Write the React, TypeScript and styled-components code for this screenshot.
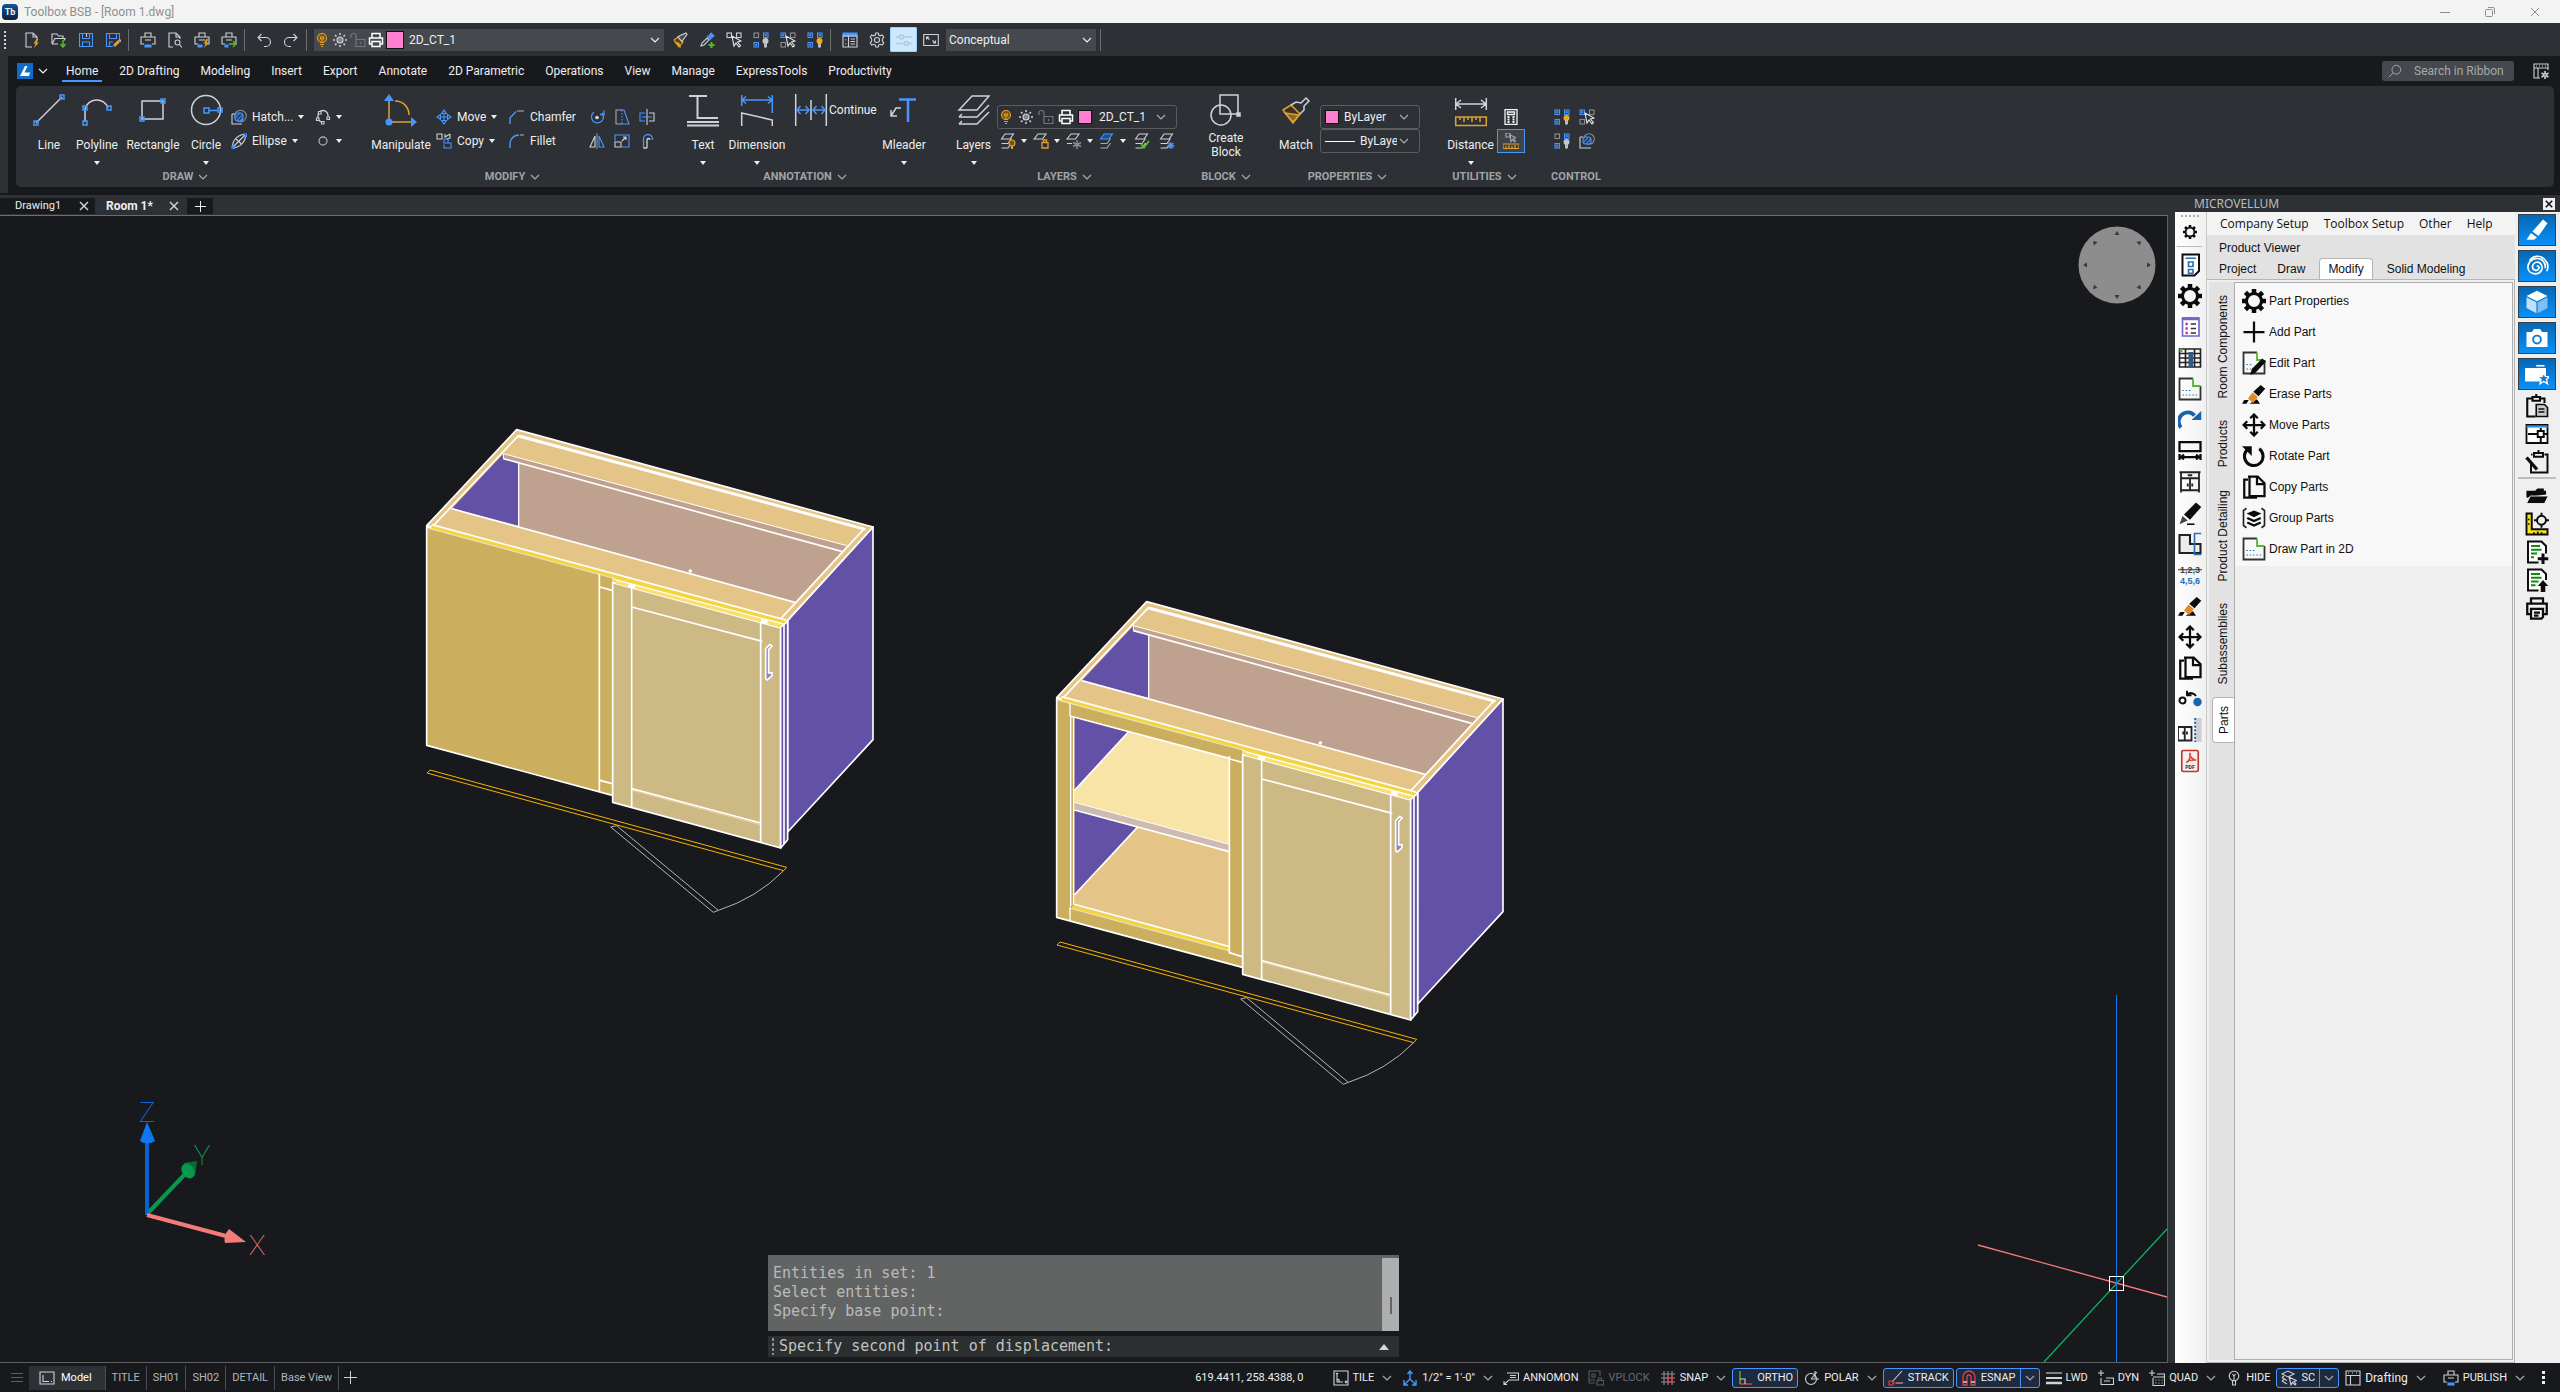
import React from "react";
import styled, { createGlobalStyle, css } from "styled-components";

const W = "#cfd2d6";
const B = "#4796ff";
const Y = "#e0a030";
const G = "#55b82f";
const R = "#e8403f";
const K = "#0b0b0b";

const GlobalStyle = createGlobalStyle`
  *, *::before, *::after { box-sizing: border-box; }
  html, body { margin: 0; padding: 0; background: #18191d; }
  body { font-family: Roboto, "Open Sans", sans-serif; font-size: 12px; line-height: 16px; color: #eceef0; }
  button, input, select { font: inherit; color: inherit; }
  button { background: none; border: 0; padding: 0; margin: 0; }
  svg { display: block; flex: none; }
`;

/* ---------- icons ---------- */

type IconProps = { size?: number; box?: number; children: React.ReactNode };
const Icon = ({ size = 16, box = 16, children }: IconProps) => (
  <svg width={size} height={size} viewBox={`0 0 ${box} ${box}`} fill="none" stroke={W} strokeWidth={1.1} aria-hidden="true">
    {children}
  </svg>
);

const Cursor = () => <path d="M6 4l2 10 2-3 3 4 1.500-1.300-3-3.700 3.500-1z" fill="#2d3034" stroke="#e6e8ea" />;
const Squares = ({ c }: { c: string[] }) => (
  <g>
    {[[1, 1], [10.5, 1], [1, 10.5]].map(([x, y], i) => (
      <g key={i} stroke={c[i]}>
        <rect x={x} y={y} width="4.5" height="4.5" />
        {c[i] === B && <rect x={x + 1.7} y={y + 1.7} width="1" height="1" />}
      </g>
    ))}
  </g>
);
const SmallBulb = ({ fill }: { fill: string }) => (
  <g stroke="none">
    <circle cx="12.5" cy="9" r="3" fill={fill} />
    <path d="M11 11h3v4l-1.500 1-1.500-1z" fill="#b9bcc0" />
  </g>
);
const Sheets = ({ top = "none", c = W }: { top?: string; c?: string }) => (
  <g stroke={c}>
    <path d="M1.500 6L5 1h8.500L10 6z" fill={top} stroke={top === "none" ? c : B} />
    <path d="M1.500 10.500h6.500l3.500-5M1.500 15h6.500l3.500-5" />
  </g>
);
const Bolt = () => <path d="M12.500 7l-3 4.500h2L10 16l5-5.500h-2.300L14.500 7z" fill={Y} stroke="none" />;
const PrinterShape = () => <path d="M5 5V1h6v4M4 12H1V5h14v7h-3M5 8h6" />;

const icons: Record<string, React.ReactNode> = {
  new: <><path d="M8 15H2V1h7l4 4v3M9 1v4h4" /><Bolt /></>,
  open: <><path d="M1 12V2h5l1.500 2H12v2.500M1 12L4 6.500h10l-1 2M1 12h6" /><path d="M12 8v6M9.500 12l2.500 3 2.500-3" stroke={G} strokeWidth="1.5" /></>,
  save: <g stroke={B}><path d="M1.500 1.500h13v13h-13z" /><path d="M4.500 1.500v5h7v-5M4.500 14.500V10h7v4.500" /><path d="M8.500 1.500V5" stroke={W} /></g>,
  saveas: <><g stroke={B}><path d="M8 14.500H1.500v-13h13V7" /><path d="M4.500 1.500v5h7v-5M4.500 14V10H8" /></g><path d="M9 14l5-5" stroke={Y} strokeWidth="3" /><path d="M14 7.500l2 2" stroke="#e89a9a" strokeWidth="2" /></>,
  print: <><PrinterShape /><path d="M5 13h6v2H5z" fill={B} stroke={B} /></>,
  preview: <><path d="M6 15H2V1h7l4 4v2M9 1v4h4" /><circle cx="10.5" cy="10.5" r="2.5" /><path d="M12.300 12.300L15 15.500" /></>,
  printbolt: <><PrinterShape /><path d="M4 13h4v2H4z" fill={B} stroke={B} /><Bolt /></>,
  plot: <><PrinterShape /><path d="M4 13h3v2H4z" fill={B} stroke={B} /><path d="M8 12h7M12 9l3 3-3 3" stroke={G} strokeWidth="1.4" /></>,
  undo: <path d="M5.500 2L2 5.500 5.500 9M2 5.500h8a4.500 4.500 0 010 9H8" />,
  redo: <path d="M10.500 2L14 5.500 10.500 9M14 5.500H6a4.500 4.500 0 000 9h2" />,
  bulb: <><circle cx="8" cy="6" r="4.5" fill="#7a5310" stroke={Y} /><path d="M6.500 7.500V5h3v2.500M8 6v5M6 10.500h4M6 12.500h4M7 14.500h2" stroke={Y} /></>,
  sun: <><circle cx="8" cy="8" r="3" fill="#83878c" /><path d="M8 1v2M8 13v2M1 8h2M13 8h2M3 3l1.500 1.500M11.500 11.500L13 13M13 3l-1.500 1.500M4.500 11.500L3 13" strokeWidth="1.5" /></>,
  lock: <g stroke="#74777b"><path d="M6 14.500h9v-7H6z M6 7.500V4a2.500 2.500 0 00-5 0v2M10.500 10v2" /></g>,
  whiteprint: <g stroke="#fff" strokeWidth="1.5"><path d="M4 6V1.500h8V6M3.500 12h-2V6h13v6h-2" /><path d="M4 9.500h8v5H4z" /></g>,
  brush: <><path d="M2 8l4-3 5 5-4 5z" fill="#5d4314" stroke={Y} /><path d="M3 10l4 1.500 1 3z" fill={Y} stroke={Y} /><path d="M6 5l2-1.500L14 1l1 1.500-4 5.500-1 1.500z" fill="#4a4d52" /></>,
  eyedrop: <><path d="M2 14l1-3 5-5 2 2-5 5z" /><path d="M8 4l4 4M9 5l3-4 3 3-4 3z" fill={B} stroke={B} /><path d="M12.500 10v6M9.500 13h6" stroke={G} strokeWidth="2" /></>,
  selsim: <><Squares c={[W, W, "transparent"]} /><Cursor /></>,
  hidegrp: <><Squares c={["#8b8e93", B, B]} /><SmallBulb fill="#c3c5c9" /></>,
  isogrp: <><Squares c={[B, "#8b8e93", "#8b8e93"]} /><Cursor /></>,
  showgrp: <><Squares c={[B, B, B]} /><SmallBulb fill="#f7a916" /></>,
  panel: <><path d="M1 1h14v3H1z" fill={B} stroke={B} /><path d="M1 4h14v11H1zM6.500 4v11M8.500 7h4.500M8.500 9.500h4.500M8.500 12h4.500" /><path d="M3.700 7v1.500M3.700 11v1.500" stroke={B} strokeWidth="1.5" /></>,
  gear: <><circle cx="8" cy="8" r="2.5" /><path d="M6.800 1h2.400l.5 2 1.600.8 2-.8 1.500 2.200L13.300 7v2l1.500 1.800-1.500 2.200-2-.7-1.600.8-.5 1.900H6.800l-.5-1.900-1.600-.8-2 .7-1.500-2.200L2.700 9V7L1.200 5.200 2.700 3l2 .8L6.300 3z" /></>,
  sliders: <g stroke="#b4c7d6" strokeWidth="1.3"><path d="M0 5h3.500M7.500 5H16M0 11.500h8.500M12.500 11.500H16" /><circle cx="5.5" cy="5" r="2" /><circle cx="10.5" cy="11.5" r="2" /></g>,
  full: <><path d="M.7 2.500h14.600v11H.7z" /><path d="M3.500 7.500v-2.500H6M3.500 5l3 2.500M12.500 8.500V11H10M12.500 11l-3-2.500" /></>,
  wsgear: <><path d="M7 15H1V1h14v6M1 5h14M5 5v10M3 3h1M6 3h1M9 3h1M12 3h1" /><path d="M12 8v8M8.500 10l7 4M8.500 14l7-4" strokeWidth="1.6" /><circle cx="12" cy="12" r="1.2" fill="#18191d" /></>,
  search: <><circle cx="9.5" cy="6.5" r="5" stroke="#a5a8ac" /><path d="M6 10l-5 5" stroke="#a5a8ac" /></>,

  hatch: <><circle cx="9.5" cy="7" r="5.8" stroke="#8b8e93" /><path d="M1 5v10h10M1 5h3" /><rect x="4" y="4" width="8" height="8" rx="3" fill="#1f3d6a" stroke={B} /><path d="M4.500 9l4.500-5M6 11.500l6-6.500M9 12l3-3.500" stroke={B} /></>,
  ellipse: <><ellipse cx="8" cy="8" rx="8" ry="4" transform="rotate(-45 8 8)" /><path d="M3 13L13.500 2.500M5 6l5.500 5" /><g stroke={B}><path d="M1 13h2.500v2.500H1zM13 1h2.500v2.500H13z" /></g></>,
  cloud: <><path d="M3 10.500V6.500a5 5 0 0110 0v1M3 10.500l3 2.500" strokeWidth="1.3" /><path d="M1.500 9h2.500v2.500H1.500zM12 8h2.500v2.500H12zM6.500 12.500H9V15H6.500zM3.500 2.500H6V5H3.500z" fill="#2d3034" /></>,
  circleS: <circle cx="8" cy="8" r="4" strokeWidth="1.3" stroke="#a7aaae" />,
  move: <><path d="M8 1v14M1 8h14" stroke={B} /><path d="M8 1L5.500 4.500h5zM8 15l-2.500-3.500h5zM1 8l3.500-2.500v5zM15 8l-3.500-2.500v5z" stroke={B} fill="#24406b" /></>,
  copy: <><path d="M1 1h5v5H1zM9 1v3l5-3M14 1v4l-4 1" /><path d="M8 6h4v4H8zM8 11.500V15h7v-5h-3" stroke={B} /></>,
  chamfer: <><path d="M1 15V9l6-6.500" stroke={B} strokeWidth="1.4" /><path d="M8 2h7" stroke="#8b8e93" strokeWidth="1.4" /></>,
  fillet: <><path d="M1 15v-3A9 9 0 0110 2" stroke={B} strokeWidth="1.4" /><path d="M11 2h4" stroke="#8b8e93" strokeWidth="1.4" /></>,
  rotate: <><path d="M5 3a6 6 0 108 1M15 1.500v4h-4" stroke={B} strokeWidth="1.3" /><circle cx="8" cy="8.5" r="1.3" fill={W} /></>,
  stretch: <><path d="M8 1H2v14h6" stroke="#a7aaae" /><path d="M8 1v14" stroke={B} strokeDasharray="1.5 1.5" /><path d="M8 15h7L10 1H8" stroke={B} /></>,
  split: <><path d="M8 0v16" /><path d="M6 4H1v8h5" stroke={B} /><path d="M10 4h5v8h-5" /><path d="M3 8h10" stroke={B} /></>,
  mirror: <><path d="M6 3v11H1z" /><path d="M8 0v16" stroke="#8b8e93" /><path d="M10 3v11h5z" stroke={B} /></>,
  scale: <><path d="M1 8V2h14v12H8" stroke={B} /><path d="M1 9h6v5H1zM8 8l4-4M9 4h3v3" /></>,
  offset: <><path d="M4.500 15V6a4.500 4.500 0 019 0v1" stroke={B} strokeWidth="1.3" /><path d="M8 15V7a1.500 1.500 0 013 0M4.500 15H8" stroke={W} strokeWidth="1.3" /></>,
  lbulb: <><Sheets /><circle cx="12" cy="10" r="3" fill="#7a5310" stroke={Y} /><path d="M12 13v3" stroke={Y} strokeWidth="2" /></>,
  llock: <><path d="M1 6L5 1h8L9.500 6z" /><path d="M9 9.500h6V15H9zM10.500 9.500V7h3v2.500" stroke={Y} strokeWidth="1.3" /></>,
  lfreeze: <><path d="M1 6L5 1h8L9.500 6zM1 10.500h5" /><path d="M11 7v9M7 9.500l8 4M15 9.500l-8 4" stroke="#8b8e93" strokeWidth="1.5" /></>,
  lblue: <Sheets top="#1d4f93" c="#a7aaae" />,
  lcheck: <><Sheets /><path d="M7 11l3 3.500L15 8" stroke={G} strokeWidth="2" /></>,
  lstar: <><Sheets /><path d="M12 9v7M8.500 12.500h7M9.500 10l5 5M14.500 10l-5 5" stroke={B} strokeWidth="1.2" /></>,
  calc: <g stroke="#f2f3f5" strokeWidth="1.3"><path d="M2 .7h12v14.600H2zM4.500 3h7v2.500h-7z" /><path d="M4.500 8h2M9.500 8h2M4.500 10.500h2M9.500 10.500h2M4.500 13h2M9.500 13h2" strokeWidth="1.8" /></g>,
  quick: <><path d="M3 0h4v4H3z" stroke="#a7aaae" /><path d="M7 2l1 6.500 1.500-2 2 2.500 1-1-2-2.500 2-1z" stroke="#a7aaae" /><path d="M0 11h16v4.500H0zM3 13v2M6 12v3M9 13v2M12 12v3" stroke={Y} /></>,
  hatchhide: <><circle cx="10" cy="6" r="5.3" stroke="#8b8e93" /><path d="M1 4v11h11M1 4h3" /><rect x="4" y="4" width="8" height="7" rx="2.5" fill="#1f3d6a" stroke={B} /><path d="M5 9l4-4.500M7 11l5-5.500" stroke={B} /></>,

  modelI: <><path d="M1 2h14v12H1zM4 5v6.500h6" /><path d="M12 11.500h1" /></>,
  tile: <path d="M1 1h14v14H1zM4 3v9h6M4 9.500h2v2M12 11l2 2M14 11l-2 2M3 3l1 1.500L5 3" />,
  annos: <g stroke={B} strokeWidth="1.4"><path d="M8 1v8M5.500 4L8 1l2.500 3M8 9l-6 6M8 9l6 6M2 10v5h4M14 10v5h-4" /></g>,
  annomon: <path d="M4 3h11.500v7H6L1 14.500M1 11v3.500h3M7 5.500h6M7 7.500h6" />,
  vplock: <g stroke="#55585c"><path d="M7 13H1V1h11v5M4 4h3v3H4zM1 10h6M9 10.500h6.500V15H9zM10.500 10.500V8h3v2.500" /></g>,
  snap: <><path d="M4 1v14M8 1v14M12 1v14M1 4h14M1 8h14M1 12h14" stroke="#8b8e93" /><path d="M8 5v7h4V5M5 8h8" stroke={R} /></>,
  ortho: <><path d="M3 1v13" stroke={G} strokeWidth="1.4" /><path d="M3 14h12" stroke={R} strokeWidth="1.4" /><path d="M3 9h5v5" /></>,
  polar: <><circle cx="7" cy="9" r="5.5" /><path d="M7 9h8M7 9l6-7M11 1v7" /></>,
  strack: <><path d="M4 12L14 1M8 13h7" stroke={W} /><path d="M1 11h4v4H1zM5 13h9" stroke={R} /></>,
  magnet: <g stroke={R} strokeWidth="1.3"><path d="M2 15V7a6 6 0 0112 0v8h-4V7a2 2 0 00-4 0v8z" /><path d="M2 12h4M10 12h4" stroke={W} /></g>,
  lwd: <><path d="M0 3h16" /><path d="M0 8h16" strokeWidth="2" /><path d="M0 13h16" strokeWidth="2.5" /></>,
  dyn: <path d="M3 0v6M0 3h6M3 8v6.500h12.500V8H8M6 11h6" />,
  quad: <path d="M3 0v6M0 3h6M4 8v7.500h11.500V4H8M4 7h11M6.500 10h1M9.500 10h1M12.500 10h1M6.500 13h1M9.500 13h1M12.500 13h1" />,
  hide: <><circle cx="8" cy="6" r="4.8" /><path d="M6.500 4l1.500 2 1.500-2M8 6v5M6.500 10.500v4.500h3v-4.500" /></>,
  sc: <><path d="M1 4l6-3 6 3-6 3zM1 7.500l5 3M1 11l5 3M3 6l-2 1.500M3 9.500L1 11" /><path d="M8 7l2 8 1.500-2.500L14 15l1-1-2-2.500 2.500-1z" fill="#2a3b52" /></>,
  drafting: <path d="M1 1h14v14H1zM1 5.500h14M5.500 5.500V15M3 3h1M7 3h1M11 3h1" />,

  gearK: <><path d="M8 0v16M0 8h16M2.300 2.300l11.400 11.400M13.700 2.300L2.300 13.700" stroke={K} strokeWidth="3" /><circle cx="8" cy="8" r="5" fill="#f7f7f7" stroke={K} strokeWidth="2" /></>,
  plusK: <path d="M8 1v14M1 8h14" stroke={K} strokeWidth="1.5" />,
  part2d: <><path d="M10 1H1v14h14V6" stroke="#333" strokeWidth="1.2" /><path d="M10 1v5h5" stroke={G} strokeWidth="1.2" /><path d="M3 9h6M3 12h10" stroke="#2d76c2" strokeDasharray="1 1.2" strokeWidth=".8" /></>,
  edit: <><path d="M10 1H1v14h14V6" stroke="#333" strokeWidth="1.2" /><path d="M10 1v5h3" stroke={G} strokeWidth="1.2" /><path d="M3 9h4M3 12h3" stroke="#2d76c2" strokeDasharray="1 1.2" strokeWidth=".8" /><path d="M5.500 16l1-4 7-7L16 7l-7 7.500z" fill={K} stroke="none" /></>,
  erase: <><path d="M0 14.500l1.500-2.500h3L3 14.500zM5 14.500h7l-2-3z" fill={K} stroke="none" /><path d="M4 11l3-4 3.500 3-3 4z" fill="#e08a2c" stroke="none" /><path d="M7.500 6.500L12.500 2 15.500 4.500 11 9.500z" fill={K} stroke="none" /></>,
  moveK: <path d="M8 1v14M1 8h14M5.500 3.500L8 1l2.500 2.500M5.500 12.500L8 15l2.500-2.500M3.500 5.500L1 8l2.500 2.500M12.500 5.500L15 8l-2.500 2.500" stroke={K} strokeWidth="1.5" />,
  rotateK: <><path d="M3.800 3.500a6.200 6.200 0 107.700-.3" stroke={K} strokeWidth="2" /><path d="M0 1.500h6.500V8z" fill={K} stroke="none" /></>,
  copyK: <path d="M4 3H1.500v12H10M4 1h6.500L15 5.500V14H5V1M10 1v5h5" stroke={K} strokeWidth="1.5" />,
  group: <><path d="M3 1.500L1 3v10l2 1.500M13 1.500L15 3v10l-2 1.500" stroke="#222" /><path d="M8 3l5 2-5 2.500L3 5z" fill={K} stroke="none" /><path d="M3.500 8L8 10l4.500-2M3.500 11L8 13l4.500-2" stroke={K} strokeWidth="1.6" /></>,
  docform: <><path d="M3 1h11v11l-3 3H3z" fill="#fff" stroke={K} strokeWidth="1.3" /><path d="M5 3.500h7M7 6h3v3H7zM7 11h3v2.500H7z" stroke="#2b6fb5" /></>,
  props: <><path d="M3 2h11v12H3z" fill="#fff" stroke="#6b69c9" /><path d="M3 2.500h11" stroke="#6b69c9" strokeWidth="2" /><path d="M5 6h1.500M5 9h1.500M5 12h1.500" stroke="#d21bb0" strokeWidth="1.6" /><path d="M8.500 6H12M8.500 9H12M8.500 12H12" stroke="#333" /></>,
  tableK: <><path d="M1 2h14v12H1zM1 5h14M1 8h14M1 11h14M5 2v12M11 2v12" stroke="#222" /><path d="M8.500 4v10" stroke="#35597e" strokeWidth="3" /><path d="M1 2h2v2H1z" fill={G} stroke="none" /></>,
  redoB: <><path d="M2 13a6 6 0 019-8" stroke="#1b62ad" strokeWidth="2.5" /><path d="M9 8h6.500V2z" fill="#1b62ad" stroke="none" /></>,
  dimK: <path d="M1 2h14v6H1zM1 10v4M15 10v4M1 12h14M4 10.500L2 12l2 1.500M12 10.500l2 1.500-2 1.500" stroke={K} strokeWidth="1.5" />,
  cabinet: <path d="M1 1.500h14M2 2v13M14 2v13M2 5.500h12M2 13.500h12M8 5.500v8M6.500 3.500h3M6.500 9v2M9.500 9v2" stroke="#222" strokeWidth="1.2" />,
  marker: <><path d="M4 9l8-8 3.500 3L8 12.500z" fill={K} stroke="none" /><path d="M3 10l3.500 3L1 15.500z" fill="#444" stroke="none" /><path d="M6 15.500h5" stroke={K} /></>,
  lshape: <><path d="M1 2h7v6h7v6H1z" stroke="#222" strokeWidth="1.4" fill="#ececec" /><path d="M15.500 1H11v14h4.500" stroke="#2b6fb5" /></>,
  nums: <><g stroke="none" fontFamily="Liberation Sans, Arial, sans-serif" fontSize="6" fontWeight="700" textAnchor="middle"><text x="8" y="6.5" fill="#444">1,2,3</text><text x="8" y="14" fill="#2470b5">4,5,6</text></g><path d="M0 4.500h16" stroke="#333" strokeWidth=".7" /></>,
  link: <><circle cx="3" cy="9" r="2" stroke={K} strokeWidth="1.3" /><circle cx="13" cy="10" r="2.8" fill="#1b62ad" stroke="none" /><path d="M12 6a4 4 0 00-6-1M6 2.500V5.500h3" stroke={K} strokeWidth="1.3" /></>,
  cab2: <><path d="M0 6h9v9H0zM4.500 6v9M3.500 9v2M6 9v2" stroke="#222" strokeWidth="1.2" /><path d="M14 0v16" stroke="#cfcfcf" strokeWidth="3.5" /><path d="M11.500 0v16" stroke="#1b62ad" strokeDasharray="1.5 1" strokeWidth="1.3" /></>,
  pdf: <><rect x="2.5" y="1" width="11" height="14" rx="1" fill="#f6eeee" stroke="#b9392f" /><path d="M5.500 9C9 7 8 4 8 3s-1 3 4 4.500c-3-.5-5 0-6.500 1.500" stroke="#e0443a" /><text x="8" y="13.5" fontSize="3.5" fontWeight="700" stroke="none" fill="#333" textAnchor="middle" fontFamily="Roboto, sans-serif">PDF</text></>,

  markerW: <><path d="M5 9l7-8 3 2.500L9 12z" fill="#fff" stroke="none" /><path d="M4 10l4 3-2 1.500H1z" fill="#fff" stroke="none" /></>,
  finger: <g stroke="#fff" strokeWidth="1.1"><path d="M8 8.500c.5-1 2 0 1 1.500s-4 1-4-1.500 3-4 5-2.500 2 5-.5 6.500-7 .5-7.500-3S4.500 3 8 3s6 3 5.500 6.500M3 4.500C5 1 10 .5 13 3.500s2.500 6 1.500 8" /></g>,
  cube: <g stroke="none"><path d="M8 .5L15 4 8 7.500 1 4z" fill="#fff" /><path d="M1 4.800l6.600 3.300v7.400L1 12z" fill="#bfe0fa" /><path d="M15 4.800L8.400 8.100v7.400L15 12z" fill="#7fc0f4" /></g>,
  camera: <><path d="M1 4h3.500L6 2h4l1.500 2H15v10H1z" fill="#fff" stroke="none" /><circle cx="8" cy="9" r="2.6" stroke="#0b7edb" strokeWidth="1.3" /></>,
  folderStar: <><path d="M7.500 2.500H13" stroke="#fff" /><path d="M0 4h14v9H0z" fill="#fff" stroke="none" /><path d="M12.500 7l1.100 2.600 2.800.2-2.100 1.900.7 2.800-2.500-1.500L10 14.500l.7-2.800-2.100-1.900 2.800-.2z" fill="#0b7edb" stroke="#fff" strokeWidth=".9" /></>,
  clip1: <><path d="M7 15H1.500V3H5M10 3h3v3M5 2h5v2.500H5zM7.500 0v2" stroke={K} strokeWidth="1.4" /><path d="M7.500 7H13l2 2v6H7.500z" fill="#ccc" stroke={K} /><path d="M9 10h4M9 12h4" stroke={K} /></>,
  clip2: <><path d="M1 2h14v12H1z" fill="#fff" stroke={K} strokeWidth="1.2" /><path d="M1 3h14" stroke="#2f93e8" strokeWidth="1.5" /><path d="M2 8h6M8.500 6h4v4h-4zM10.500 4v2M10.500 10v4M12.500 8H15" stroke={K} strokeWidth="1.3" /></>,
  clip3: <><path d="M5 3H4M4 9v6h11V3h-2M6 2h6v2.500H6zM9 0v2" stroke={K} strokeWidth="1.3" /><path d="M1 5l7 8" stroke={K} strokeWidth="2.2" /></>,
  folderK: <><path d="M1.500 9V5H7l1.500-1.500H12V5h1.500v2" fill={K} stroke={K} /><path d="M1 13L3.500 8H15.500L13 13z" fill={K} stroke="#efefef" strokeWidth=".6" /></>,
  ruler: <><path d="M1 1h3.500v10.500H15V15H1z" fill="#f4e51c" stroke={K} strokeWidth="1.3" /><path d="M6 13.500v1.500M8.500 13v2M11 13.500V15M2 5h1M2 8h1" stroke={K} /><circle cx="11" cy="5.5" r="3" stroke={K} strokeWidth="1.3" /><path d="M11 .5V3M11 8v2.500M6 5.500h2.500M13.500 5.500H16" stroke={K} strokeWidth="1.3" /></>,
  repAdd: <><path d="M9 15H2V1h9l3 3v5" fill="#fff" stroke={K} strokeWidth="1.3" /><path d="M4 4h6M4 6.500h7M4 9h4M4 11.500h2" stroke="#128a12" strokeWidth="1.4" /><path d="M12 9v7M8.500 12.500h7" stroke={K} strokeWidth="2" /></>,
  repUp: <><path d="M9 15H2V1h9l3 3v4" fill="#fff" stroke={K} strokeWidth="1.3" /><path d="M4 4h6M4 6.500h7M4 9h5M4 11.500h3" stroke="#128a12" strokeWidth="1.4" /><path d="M12 8l3.500 4h-2v4h-3v-4h-2z" fill={K} stroke="none" /></>,
  printK: <path d="M4 5V1.500h8V5M4 12H1.500V5h13v7H12M4 8.500h8V14l-1 1H4zM6 11h4M6 13h3" stroke={K} strokeWidth="1.5" />,
};

const bigIcons: Record<string, React.ReactNode> = {
  line: <><path d="M3 29L29 3" /><g stroke={B}><path d="M1 27h4v4H1zM27 1h4v4h-4z" /></g></>,
  polyline: <><path d="M4 28V15a12 12 0 0123-1" stroke={W} /><g stroke={B}><path d="M2 27h4v4H2zM2 12h4v4H2zM26 12h4v4h-4z" /></g></>,
  rect: <><path d="M5 7h21v18H5z" /><g stroke={B}><path d="M24 5h4v4h-4zM3 23h4v4H3z" /></g></>,
  circle: <><circle cx="16" cy="16" r="14.5" /><g stroke={B}><path d="M14 14h5v5h-5zM28 14h4v4h-4zM19 16.500h9" /></g></>,
  manip: <><path d="M4 28V4M4 28h24" stroke={Y} /><path d="M10 7c9 0 14 7 14 14" stroke={Y} /><path d="M4 0l5 7H-1zM32 28l-6-5v10z" fill={B} stroke="none" /><circle cx="4" cy="28" r="3.5" fill={B} stroke="none" /></>,
  text: <path d="M2 2h18M10.500 2v22H31M0 28h32M0 31.500h32" strokeWidth="2" />,
  dim: <><g stroke={B}><path d="M.700 1v11M31.300 1v18M1 6h30M5 2.500L1 6l4 3.500M27 2.500L31 6l-4 3.500" /></g><path d="M.700 32V19l30.600 7v6" /></>,
  cont: <><path d="M.700 0v32M16 6v20M31.300 0v32" /><g stroke={B}><path d="M2 16h12M5.500 12L2 16l3.500 4M10.500 12l3.500 4-3.500 4M18 16h12M21.500 12L18 16l3.500 4M26.500 12l3.500 4-3.500 4" /></g></>,
  mleader: <><path d="M11 5.500h17M20 5.500V28" stroke={B} strokeWidth="2.5" /><path d="M13 14H8l-5 8M3 16v6h6" /></>,
  layers: <><path d="M1 16L14 2h17L19 16zM1 23h18L31 11M1 30h18L31 18" /><path d="M1 23l3-3M1 30l3-3" /></>,
  block: <><circle cx="11" cy="21" r="10" /><path d="M10 1h18v19H10z" /><path d="M27 19h3v3h-3z" fill={W} /></>,
  match: <><path d="M3 16l8-5 9 9-7 9z" fill="#3a3325" stroke={Y} /><path d="M5 19l14 2-6 7z" fill="#8a6428" stroke={Y} /><path d="M11 11l5-3 5 1 5-5 3 3-5 5v4l-4 4" /></>,
  dist: <><path d="M.700 4v12M31.300 4v12M1 10h30M6 6l-5 4 5 4M26 6l5 4-5 4" /><path d="M.700 23h30.600v8.500H.700zM5 23v3M9 23v5M13 23v3M17 23v5M21 23v3M25 23v5" stroke={Y} /></>,
};

const Ico = ({ n, size }: { n: string; size?: number }) => <Icon size={size}>{icons[n]}</Icon>;
const Big = ({ n }: { n: string }) => <svg width={32} height={32} viewBox="0 0 32 32" fill="none" stroke={W} strokeWidth={1.5} overflow="visible" aria-hidden="true">{bigIcons[n]}</svg>;

const Chevron = ({ c = "#a7aaae" }: { c?: string }) => (
  <svg width="10" height="10" viewBox="0 0 10 10" fill="none" stroke={c} strokeWidth="1.2" aria-hidden="true"><path d="M1 3l4 4 4-4" /></svg>
);
const Tri = () => (
  <svg width="6" height="4" viewBox="0 0 6 4" aria-hidden="true"><path d="M0 0h6L3 4z" fill="#eceef0" /></svg>
);
const Cross = ({ c = "#cfd2d6", w = 1.5, s = 10 }: { c?: string; w?: number; s?: number }) => (
  <svg width={s} height={s} viewBox="0 0 10 10" stroke={c} strokeWidth={w} aria-hidden="true"><path d="M1 1l8 8M9 1L1 9" /></svg>
);

/* ---------- shell ---------- */

const Shell = styled.div`
  display: flex;
  flex-direction: column;
  min-height: 100vh;
  background: #18191d;
`;

const TitleBar = styled.header`
  display: flex;
  align-items: center;
  gap: 6px;
  height: 23px;
  padding: 0 17px 0 2px;
  background: #f3f3f3;
  color: #8f8f8f;
`;
const AppLogo = styled.span`
  display: grid;
  place-items: center;
  width: 16px;
  height: 16px;
  border-radius: 4px;
  background: linear-gradient(#12559b, #0c2138);
  color: #e8f4ff;
  font-size: 9px;
  font-weight: 700;
`;
const WindowButtons = styled.div`
  display: flex;
  gap: 29px;
  margin-left: auto;
`;
const WindowButton = styled.button`
  display: grid;
  place-items: center;
  width: 16px;
  height: 16px;
`;

const Toolbar = styled.div`
  display: flex;
  align-items: center;
  height: 33px;
  background: #2d3034;
`;
const Grip = styled.span`
  width: 2px;
  height: 18px;
  margin: 0 12px 0 4px;
  background: repeating-linear-gradient(#cfd2d6 0 2px, transparent 2px 4px);
`;
const ToolButton = styled.button<{ $on?: boolean }>`
  display: grid;
  place-items: center;
  width: 27px;
  height: 25px;
  border-radius: 2px;
  ${(p) => p.$on && css`background: #cce8ff; box-shadow: inset 0 0 0 1px #99d1ff;`}
`;
const ToolSep = styled.span`
  width: 1px;
  height: 22px;
  margin: 0 5px 0 2px;
  background: #6a6c70;
`;
const Combo = styled.label<{ $w: number; $flat?: boolean; $gap?: number; $pl?: number }>`
  display: flex;
  align-items: center;
  gap: ${(p) => p.$gap ?? 2}px;
  width: ${(p) => p.$w}px;
  height: ${(p) => (p.$flat ? 22 : 24)}px;
  padding: 0 ${(p) => (p.$flat ? 4 : 10)}px 0 ${(p) => p.$pl ?? 0}px;
  margin: ${(p) => (p.$flat ? "0 2px" : "0")};
  background: ${(p) => (p.$flat ? "#45484c" : "transparent")};
  border: ${(p) => (p.$flat ? "0" : "1px solid #5a5c60")};
  border-radius: ${(p) => (p.$flat ? 0 : 3)}px;
`;
const Select = styled.select`
  appearance: none;
  flex: 1;
  min-width: 0;
  height: 20px;
  padding: 0;
  margin: 0 0 0 3px;
  border: 0;
  outline: 0;
  background: transparent;
  text-overflow: clip;
`;
const Swatch = styled.span<{ $s: number }>`
  flex: none;
  width: ${(p) => p.$s}px;
  height: ${(p) => p.$s}px;
  background: #ff80d0;
  border: 1px solid #111;
`;

/* ---------- ribbon ---------- */

const RibbonWrap = styled.div`
  display: flex;
  height: 139px;
`;
const RibbonGrip = styled.div`
  display: flex;
  align-items: center;
  width: 8px;
  margin-bottom: 2px;
  background: #2d3034;
`;
const RibbonMain = styled.div`
  flex: 1;
  min-width: 0;
  padding: 0 6px 8px 8px;
`;
const RibbonTabs = styled.nav`
  display: flex;
  align-items: center;
  gap: 1px;
  height: 30px;
`;
const BrandButton = styled.button`
  display: flex;
  align-items: center;
  gap: 5px;
  margin: 0 7px 0 1px;
`;
const RibbonTab = styled.button<{ $on?: boolean }>`
  position: relative;
  height: 28px;
  padding: 0 10px;
  ${(p) => p.$on && css`
    &::after { content: ""; position: absolute; left: 6px; right: 6px; bottom: 3px; height: 2px; background: #4796ff; }
  `}
`;
const SearchBox = styled.label`
  display: flex;
  align-items: center;
  gap: 12px;
  width: 132px;
  height: 20px;
  margin: 0 18px 0 auto;
  padding-left: 6px;
  border-radius: 3px;
  background: #45484c;
  input {
    width: 100px;
    padding: 0;
    border: 0;
    outline: 0;
    background: transparent;
  }
  input::placeholder { color: #a5a8ac; opacity: 1; }
`;
const WorkspaceBtn = styled.button`
  margin-right: 5px;
`;
const RibbonPanel = styled.div`
  display: flex;
  height: 101px;
  border-radius: 5px;
  background: #2d3034;
`;
const GroupBox = styled.section<{ $w: number }>`
  position: relative;
  display: flex;
  flex-direction: column;
  flex: none;
  width: ${(p) => p.$w}px;
  & + &::before { content: ""; position: absolute; left: 0; top: 23px; height: 57px; width: 1px; background: #4b4e52; }
`;
const GroupBody = styled.div<{ $pl: number }>`
  display: flex;
  height: 82px;
  padding: 8px 0 0 ${(p) => p.$pl}px;
`;
const GroupTitle = styled.button`
  display: flex;
  align-items: center;
  justify-content: center;
  gap: 5px;
  height: 18px;
  color: #a0a3a8;
  font-size: 11px;
  font-weight: 700;
`;
const BigBtn = styled.button<{ $w: number }>`
  display: flex;
  flex-direction: column;
  align-items: center;
  width: ${(p) => p.$w}px;
  height: 72px;
`;
const BigLabel = styled.span`
  display: flex;
  align-items: center;
  height: 28px;
  margin: 5px 0 2px;
  line-height: 14px;
  text-align: center;
  white-space: pre;
`;
const Rows = styled.div<{ $w?: number }>`
  width: ${(p) => (p.$w ? `${p.$w}px` : "auto")};
  padding-top: 11px;
`;
const Row = styled.div`
  display: flex;
  height: 24px;
`;
const SmallBtn = styled.button<{ $w?: number; $on?: boolean; $c?: boolean }>`
  display: flex;
  align-items: center;
  justify-content: ${(p) => (p.$c ? "center" : "flex-start")};
  gap: 5px;
  width: ${(p) => (p.$w ? `${p.$w}px` : "auto")};
  height: 24px;
  white-space: nowrap;
  ${(p) => p.$on && css`background: #3f4246; border: 1px solid #4796ff;`}
`;
const ContinueBtn = styled.button`
  display: flex;
  align-items: center;
  gap: 2px;
  width: 88px;
  height: 32px;
  padding-left: 7px;
`;
const LineSample = styled.span`
  flex: none;
  width: 30px;
  height: 1px;
  background: #fff;
`;

const Group = ({ title, w, pl, plain, children }: { title: string; w: number; pl: number; plain?: boolean; children: React.ReactNode }) => (
  <GroupBox $w={w}>
    <GroupBody $pl={pl}>{children}</GroupBody>
    <GroupTitle>{title}{!plain && <Chevron />}</GroupTitle>
  </GroupBox>
);
const BigButton = ({ n, w, label, arrow }: { n: string; w: number; label: string; arrow?: boolean }) => (
  <BigBtn $w={w}><Big n={n} /><BigLabel>{label}</BigLabel>{arrow && <Tri />}</BigBtn>
);
const Small = ({ n, w, label, arrow, center }: { n: string; w?: number; label?: string; arrow?: boolean; center?: boolean }) => (
  <SmallBtn $w={w} $c={center} aria-label={label ?? n}><Ico n={n} />{label}{arrow && <Tri />}</SmallBtn>
);

/* ---------- workspace ---------- */

const Workspace = styled.main`
  display: flex;
  flex: 1;
  gap: 7px;
  background: #2d3034;
`;
const Drawing = styled.section`
  display: flex;
  flex: 1;
  flex-direction: column;
  min-width: 0;
`;
const DocTabs = styled.div`
  display: flex;
  align-items: flex-end;
  gap: 2px;
  height: 21px;
  padding-bottom: 1px;
  border-bottom: 1px solid #6c6d70;
`;
const DocTab = styled.div<{ $on?: boolean; $w: number }>`
  display: flex;
  align-items: center;
  justify-content: space-between;
  width: ${(p) => p.$w}px;
  height: 16px;
  padding: 0 6px 0 ${(p) => (p.$on ? 9 : 15)}px;
  background: ${(p) => (p.$on ? "#2d3034" : "#18191d")};
  font-weight: ${(p) => (p.$on ? 700 : 400)};
  font-size: ${(p) => (p.$on ? 12 : 11)}px;
`;
const AddTab = styled.button`
  display: grid;
  place-items: center;
  width: 26px;
  height: 16px;
  background: #18191d;
`;
const CanvasArea = styled.div`
  position: relative;
  flex: 1;
  background: #18191d;
  border: solid #5f6063;
  border-width: 0 1px 1px 0;
`;
const Scene = styled.svg`
  position: absolute;
  inset: 0;
  width: 100%;
  height: 100%;
`;
const CommandDock = styled.div`
  position: absolute;
  left: 768px;
  bottom: 5px;
  width: 631px;
  font-family: "DejaVu Sans Mono", "Liberation Mono", monospace;
  font-size: 15px;
  line-height: 19px;
`;
const History = styled.div`
  position: relative;
  height: 76px;
  padding: 9px 5px;
  background: #626463;
  color: #b9bbbb;
  p { margin: 0; }
  &::after { content: ""; position: absolute; right: 0; top: 3px; bottom: 0; width: 17px; background: #adafaf; }
  &::before { content: ""; position: absolute; z-index: 1; right: 7px; top: 42px; width: 2px; height: 17px; background: #666; }
`;
const CommandLine = styled.label`
  display: flex;
  align-items: center;
  gap: 5px;
  height: 21px;
  margin-top: 5px;
  padding: 0 10px 0 4px;
  background: #2b2f30;
  color: #c0c2c2;
  input {
    flex: 1;
    padding: 0;
    border: 0;
    outline: 0;
    background: transparent;
  }
`;
const CommandGrip = styled.span`
  width: 2px;
  height: 17px;
  background: repeating-linear-gradient(#8d9090 0 3px, transparent 3px 5px);
`;

/* ---------- side panel ---------- */

const Side = styled.aside`
  display: flex;
  flex-direction: column;
  width: 385px;
  color: #111;
`;
const SideHead = styled.div`
  display: flex;
  align-items: center;
  justify-content: space-between;
  height: 17px;
  padding: 0 5px 0 19px;
  color: #b9bbbe;
  font-family: "Noto Sans", sans-serif;
`;
const CloseBtn = styled.button`
  display: grid;
  place-items: center;
  width: 12px;
  height: 12px;
  background: #f0f0f0;
`;
const SideBody = styled.div`
  display: flex;
  flex: 1;
  background: #efefef;
`;
const LeftStrip = styled.div`
  display: flex;
  flex-direction: column;
  align-items: center;
  width: 32px;
  padding-right: 2px;
  border-right: 1px solid #c9c9c9;
  background: linear-gradient(90deg, #fff, #f0f0f0);
`;
const StripGrip = styled.span`
  width: 18px;
  height: 2px;
  margin-top: 3px;
  background: repeating-linear-gradient(90deg, #aaa 0 2px, transparent 2px 4px);
`;
const StripBtn = styled.button<{ $h?: number }>`
  display: grid;
  place-items: center;
  width: 28px;
  height: ${(p) => p.$h ?? 31}px;
`;
const StripRule = styled.hr`
  width: 25px;
  height: 1px;
  margin: 0 0 2px;
  border: 0;
  background: #bdbdbd;
`;
const Center = styled.div`
  display: flex;
  flex: 1;
  flex-direction: column;
  min-width: 0;
`;
const Menu = styled.nav`
  display: flex;
  align-items: center;
  gap: 15px;
  height: 23px;
  padding-left: 13px;
  background: #f3f3f3;
  font-family: "Open Sans", "Noto Sans", sans-serif;
`;
const PanelTabs = styled.div`
  padding: 3px 12px 0 4px;
  background: #e2e2e2;
  font-family: "Liberation Sans", Arial, sans-serif;
`;
const TabRow = styled.div`
  display: flex;
  gap: 5px;
  height: 20px;
  & + & { height: 21px; }
`;
const PanelTab = styled.button<{ $on?: boolean }>`
  height: 100%;
  padding: 0 8px;
  white-space: nowrap;
  ${(p) => p.$on && css`background: #fff; border: 1px solid #b5b5b5; border-bottom: 0; border-radius: 4px 4px 0 0; margin: 0 1px;`}
`;
const PanelFrame = styled.div`
  display: flex;
  flex: 1;
  padding: 2px 1px 2px 2px;
  border: 1px solid #b5b5b5;
  border-left: 0;
  background: #efefef;
  font-family: "Liberation Sans", Arial, sans-serif;
`;
const VTabs = styled.div`
  display: flex;
  flex-direction: column;
  align-items: flex-end;
  width: 25px;
  padding-top: 1px;
  background: #e2e2e2;
`;
const VTab = styled.button<{ $on?: boolean }>`
  display: flex;
  justify-content: center;
  width: 22px;
  padding: ${(p) => (p.$on ? "8px 0" : "12px 0 10px")};
  ${(p) => p.$on && css`background: #fff; border: 1px solid #b5b5b5; border-right: 0; border-radius: 4px 0 0 4px; margin-top: 2px;`}
  span { writing-mode: vertical-rl; transform: rotate(180deg); }
`;
const ListPane = styled.div`
  flex: 1;
  border: 1px solid #adadad;
`;
const PartList = styled.ul`
  margin: 0;
  padding: 2px 0;
  list-style: none;
  background: #f8f8f8;
`;
const PartItem = styled.button`
  display: flex;
  align-items: center;
  gap: 3px;
  width: 100%;
  height: 31px;
  padding-left: 7px;
`;
const RightStrip = styled.div`
  display: flex;
  flex-direction: column;
  align-items: center;
  width: 45px;
  padding: 2px 3px 0 2px;
`;
const BlueBtn = styled.button`
  display: grid;
  place-items: center;
  width: 38px;
  height: 32px;
  margin-bottom: 4px;
  border: 1px solid #33414e;
  background: linear-gradient(#0567b4, #0a90f8);
  & + :not(&) { margin-top: -2px; }
`;
const PlainBtn = styled.button`
  display: grid;
  place-items: center;
  width: 38px;
  height: 28px;
`;
const RightRule = styled.hr`
  width: 38px;
  height: 2px;
  margin: 1px 0 3px;
  border: 0;
  background: #bdbdbd;
`;

/* ---------- status bar ---------- */

const StatusBar = styled.footer`
  display: flex;
  align-items: center;
  height: 29px;
  padding: 0 14px 0 11px;
  background: #18191d;
  font-size: 11px;
`;
const LayoutTab = styled.button<{ $on?: boolean }>`
  display: flex;
  align-items: center;
  gap: 6px;
  height: 24px;
  padding: 0 ${(p) => (p.$on ? 13 : 6)}px 0 ${(p) => (p.$on ? 10 : 6)}px;
  border-right: 1px solid #4b4e52;
  color: ${(p) => (p.$on ? "#fff" : "#b4b6ba")};
  background: ${(p) => (p.$on ? "#2d3034" : "transparent")};
  &:last-of-type { border: 0; }
`;
const MenuLines = styled.button`
  width: 12px;
  height: 10px;
  margin-right: 6px;
  background: repeating-linear-gradient(#5b5d61 0 1px, transparent 1px 4px);
`;
const PlusButton = styled.button`
  margin-left: 5px;
`;
const StatusGroup = styled.div`
  display: flex;
  align-items: center;
  margin-left: auto;
`;
const Coords = styled.span`
  margin-right: 24px;
`;
const StatusBtn = styled.button<{ $on?: boolean; $dim?: boolean; $large?: boolean }>`
  display: flex;
  align-items: center;
  gap: 4px;
  height: 20px;
  padding: 0 ${(p) => (p.$large ? 12 : 5)}px 0 5px;
  white-space: nowrap;
  font-size: ${(p) => (p.$large ? 12 : 11)}px;
  color: ${(p) => (p.$dim ? "#66696d" : "inherit")};
  ${(p) => p.$on && css`
    padding: 0 4px;
    margin: 0 1px;
    border: 1px solid #4796ff;
    border-radius: 3px;
    background: #1e2a3d;
  `}
`;
const StatusArrow = styled.span<{ $split?: boolean }>`
  display: grid;
  place-items: center;
  height: 18px;
  ${(p) => (p.$split ? css`border-left: 1px solid #4796ff; padding-left: 4px;` : css`margin-left: 4px;`)}
`;
const KebabButton = styled.button`
  margin-left: 12px;
`;

/* ---------- drawing contents ---------- */

const Cabinet = ({ x, y, open }: { x: number; y: number; open?: boolean }) => (
  <g transform={`translate(${x} ${y}) scale(.33333)`} stroke="#fff" strokeWidth="5" strokeLinejoin="round" fill="none">
    <path d="M1163 637L1419 357V995L1163 1272z" fill="#6251a6" />
    <path d="M350 65L1419 357 1160 640 80 353z" fill="#e4c487" />
    <path d="M310 137V152L356 163V353L155 302z" fill="#6251a6" stroke="none" />
    <path d="M310 137L1340 413 1185 583 356 356V163L310 152z" fill="#bfa18f" stroke="none" />
    <path d="M310 137L1340 413M310 137V152" strokeWidth="3" />
    <path d="M310 152L1325 430M155 302L1185 583" />
    <path d="M356 163V356" strokeWidth="4" />
    <path d="M356 84L1396 364" strokeWidth="9" />
    <path d="M356 82L103 350M1390 365L1138 637" />
    <circle cx="871" cy="489" r="4" fill="#fff" strokeWidth="3" />
    <path d="M80 355L640 505V1163L80 1012z" fill="#cbae5e" />
    {open ? (
      <>
        <path d="M133 412L598 537V1107L133 982z" fill="#e4c487" stroke="none" />
        <path d="M133 412L295 456 133 632zM133 690L322 742 133 945z" fill="#6251a6" stroke="none" />
        <path d="M295 456L598 537V793L133 667V632z" fill="#f8e4a6" stroke="none" />
        <path d="M133 667L598 793V815L133 690z" fill="#cdbab0" stroke="none" />
        <path d="M295 456L133 632M322 742L133 945M133 690L598 815M120 408L598 535M130 972L598 1100" />
        <path d="M133 667L598 793" strokeWidth="3" />
        <path d="M127 981L598 1107" stroke="#f5d442" strokeWidth="9" />
        <path d="M120 985L598 1113" strokeWidth="2" />
        <path d="M120 365V408M120 980V1020M122 408V978M131 410V972" strokeWidth="4" />
        <path d="M600 530H636V1130L600 1120z" fill="#cbae5e" stroke="none" />
        <path d="M598 528V1118L636 1130M600 537L636 547" />
      </>
    ) : (
      <path d="M598 493V1151M600 537L636 547M600 1117L636 1127" />
    )}
    <path d="M640 500L1160 640V662L640 528z" fill="#f5d442" stroke="none" />
    <path d="M95 357L1158 643" stroke="#f5d442" strokeWidth="10" />
    <path d="M95 350L1158 636" />
    <path d="M85 361L645 512" strokeWidth="2" />
    <path d="M638 524L1142 660V1320L638 1183z" fill="#ccb983" />
    <path d="M648 522L1148 655" stroke="#fae06e" strokeWidth="9" />
    <path d="M645 515L1150 648" strokeWidth="4" />
    <path d="M685 533L705 538M1083 638L1103 643" strokeWidth="11" />
    <path d="M1142 658L1163 640V1295L1142 1320z" fill="#6251a6" />
    <path d="M1152 650V1308" strokeWidth="5" />
    <path d="M695 538V1198M1082 642V1303M695 597L1087 700M695 1142L1082 1245" />
    <path d="M697 1147L1080 1250" stroke="#f8e4a6" strokeWidth="2" />
    <path d="M1097 722L1110 709 1116 714 1106 725V795L1116 794V803L1102 816 1097 812z" fill="#8f88b8" strokeWidth="5" />
    <path d="M81 1095L90 1086 1160 1378 1151 1388z" stroke="#f5b400" strokeWidth="3" />
    <path d="M955 1507L650 1253 632 1257 940 1513 955 1507Q1070 1470 1151 1388" stroke="#b4b5b7" strokeWidth="3" />
  </g>
);

const Ucs = () => (
  <g fill="none" transform="translate(0 -216)">
    <path d="M148 1213L188 1171" stroke="#06984b" strokeWidth="4" />
    <path d="M184 1163L197 1161 195 1176z" fill="#076d38" />
    <ellipse cx="188" cy="1171" rx="6" ry="8" fill="#06984b" transform="rotate(-35 188 1171)" />
    <path d="M147 1215V1140" stroke="#0a62cf" strokeWidth="4" />
    <path d="M147 1122L155 1141Q147 1146 140 1141z" fill="#0d78f2" />
    <path d="M147 1215L226 1236" stroke="#f47c78" strokeWidth="4" />
    <path d="M229 1229L246 1242 225 1243Q223 1236 229 1229z" fill="#f47c78" />
    <g fontFamily="Roboto, sans-serif" fontSize="28" fontWeight="100" textAnchor="middle">
      <text x="147" y="1122" fill="#0d78f2">Z</text>
      <text x="202" y="1165" fill="#0cb45c">Y</text>
      <text x="257" y="1255" fill="#f47c78">X</text>
    </g>
  </g>
);

const toolsA = ["new", "open", "save", "saveas"];
const toolsB = ["print", "preview", "printbolt", "plot"];
const toolsC = ["brush", "eyedrop", "selsim", "hidegrp", "isogrp", "showgrp"];
const ribbonTabs = ["Home", "2D Drafting", "Modeling", "Insert", "Export", "Annotate", "2D Parametric", "Operations", "View", "Manage", "ExpressTools", "Productivity"];
const strip = ["docform", "gearK", "props", "tableK", "part2d", "redoB", "dimK", "cabinet", "marker", "lshape", "nums", "erase", "moveK", "copyK", "link", "cab2", "pdf"];
const parts: [string, string][] = [
  ["gearK", "Part Properties"], ["plusK", "Add Part"], ["edit", "Edit Part"], ["erase", "Erase Parts"], ["moveK", "Move Parts"],
  ["rotateK", "Rotate Part"], ["copyK", "Copy Parts"], ["group", "Group Parts"], ["part2d", "Draw Part in 2D"],
];
const vtabs = ["Room Components", "Products", "Product Detailing", "Subassemblies", "Parts"];

type StatusItem = { n: string; label: string; arrow?: boolean; on?: boolean; dim?: boolean; large?: boolean };
const statusItems: StatusItem[] = [
  { n: "tile", label: "TILE", arrow: true },
  { n: "annos", label: "1/2\" = 1'-0\"", arrow: true },
  { n: "annomon", label: "ANNOMON" },
  { n: "vplock", label: "VPLOCK", dim: true },
  { n: "snap", label: "SNAP", arrow: true },
  { n: "ortho", label: "ORTHO", on: true },
  { n: "polar", label: "POLAR", arrow: true },
  { n: "strack", label: "STRACK", on: true },
  { n: "magnet", label: "ESNAP", on: true, arrow: true },
  { n: "lwd", label: "LWD" },
  { n: "dyn", label: "DYN" },
  { n: "quad", label: "QUAD", arrow: true },
  { n: "hide", label: "HIDE" },
  { n: "sc", label: "SC", on: true, arrow: true },
  { n: "drafting", label: "Drafting", arrow: true, large: true },
  { n: "print", label: "PUBLISH", arrow: true },
];

const Tools = ({ names, on }: { names: string[]; on?: string }) => (
  <>{names.map((n) => <ToolButton key={n} $on={n === on} aria-label={n}><Ico n={n} /></ToolButton>)}</>
);

export default function App() {
  return (
    <Shell>
      <GlobalStyle />
      <TitleBar>
        <AppLogo>Tb</AppLogo>
        <span>Toolbox BSB - [Room 1.dwg]</span>
        <WindowButtons>
          <WindowButton aria-label="Minimize"><svg width="10" height="10" stroke="#8f8f8f"><path d="M0 5.500h10" /></svg></WindowButton>
          <WindowButton aria-label="Restore"><svg width="10" height="10" stroke="#8f8f8f" fill="none"><rect x=".5" y="2.5" width="7" height="7" rx="1" /><path d="M3 .500h5q1.500 0 1.500 1.500v5" /></svg></WindowButton>
          <WindowButton aria-label="Close"><Cross c="#8f8f8f" w={1} /></WindowButton>
        </WindowButtons>
      </TitleBar>

      <Toolbar>
        <Grip />
        <Tools names={toolsA} /><ToolSep />
        <Tools names={toolsB} /><ToolSep />
        <Tools names={["undo", "redo"]} /><ToolSep />
        <Combo $w={350} $flat>
          <Ico n="bulb" /><Ico n="sun" /><Ico n="lock" /><Ico n="whiteprint" />
          <Swatch $s={18} />
          <Select aria-label="Current layer"><option>2D_CT_1</option></Select>
          <Chevron c="#eceef0" />
        </Combo>
        <Tools names={toolsC} /><ToolSep />
        <Tools names={["panel", "gear", "sliders", "full"]} on="sliders" />
        <Combo $w={150} $flat>
          <Select aria-label="Visual style"><option>Conceptual</option></Select>
          <Chevron c="#eceef0" />
        </Combo>
        <ToolSep />
      </Toolbar>

      <RibbonWrap>
        <RibbonGrip><Grip /></RibbonGrip>
        <RibbonMain>
          <RibbonTabs>
            <BrandButton aria-label="Application menu">
              <svg width="16" height="16" viewBox="0 0 16 16"><path d="M0 0h16v16H0z" fill="#0f6cc9" /><path d="M3 13L8 3h2.500L7.500 9.500H13L12 13z" fill="#fff" /></svg>
              <Chevron c="#eceef0" />
            </BrandButton>
            {ribbonTabs.map((t) => <RibbonTab key={t} $on={t === "Home"}>{t}</RibbonTab>)}
            <SearchBox><Ico n="search" size={14} /><input placeholder="Search in Ribbon" aria-label="Search in Ribbon" /></SearchBox>
            <WorkspaceBtn aria-label="Customize"><Ico n="wsgear" /></WorkspaceBtn>
          </RibbonTabs>
          <RibbonPanel>
            <Group title="DRAW" w={339} pl={13}>
              <BigButton n="line" w={40} label="Line" />
              <BigButton n="polyline" w={56} label="Polyline" arrow />
              <BigButton n="rect" w={56} label="Rectangle" />
              <BigButton n="circle" w={50} label="Circle" arrow />
              <Rows $w={84}><Small n="hatch" label="Hatch..." arrow /><Small n="ellipse" label="Ellipse" arrow /></Rows>
              <Rows><Small n="cloud" arrow /><Small n="circleS" arrow /></Rows>
            </Group>
            <Group title="MODIFY" w={315} pl={11}>
              <BigButton n="manip" w={70} label="Manipulate" />
              <Rows $w={73}><Small n="move" label="Move" arrow /><Small n="copy" label="Copy" arrow /></Rows>
              <Rows $w={75}><Small n="chamfer" label="Chamfer" /><Small n="fillet" label="Fillet" /></Rows>
              <Rows>
                <Row>{["rotate", "stretch", "split"].map((n) => <Small key={n} n={n} w={25} center />)}</Row>
                <Row>{["mirror", "scale", "offset"].map((n) => <Small key={n} n={n} w={25} center />)}</Row>
              </Rows>
            </Group>
            <Group title="ANNOTATION" w={270} pl={10}>
              <BigButton n="text" w={46} label="Text" arrow />
              <BigButton n="dim" w={62} label="Dimension" arrow />
              <ContinueBtn><Big n="cont" />Continue</ContinueBtn>
              <BigButton n="mleader" w={56} label="Mleader" arrow />
            </Group>
            <Group title="LAYERS" w={249} pl={10}>
              <BigButton n="layers" w={47} label="Layers" arrow />
              <Rows>
                <Combo $w={180} $gap={4}>
                  <Ico n="bulb" /><Ico n="sun" /><Ico n="lock" /><Ico n="whiteprint" />
                  <Swatch $s={14} />
                  <Select aria-label="Layer"><option>2D_CT_1</option></Select>
                  <Chevron />
                </Combo>
                <Row>
                  {["lbulb", "llock", "lfreeze", "lblue"].map((n) => <Small key={n} n={n} w={33} arrow center />)}
                  {["lcheck", "lstar"].map((n) => <Small key={n} n={n} w={25} center />)}
                </Row>
              </Rows>
            </Group>
            <Group title="BLOCK" w={74} pl={1}>
              <BigButton n="block" w={72} label={"Create\nBlock"} />
            </Group>
            <Group title="PROPERTIES" w={169} pl={9}>
              <BigButton n="match" w={48} label="Match" />
              <Rows>
                <Combo $w={100} $pl={4}><Swatch $s={14} /><Select aria-label="Color"><option>ByLayer</option></Select><Chevron /></Combo>
                <Combo $w={100} $pl={4}><LineSample /><Select aria-label="Linetype"><option>ByLayer</option></Select><Chevron /></Combo>
              </Rows>
            </Group>
            <Group title="UTILITIES" w={105} pl={12}>
              <BigButton n="dist" w={53} label="Distance" arrow />
              <Rows>
                <SmallBtn $w={28} $c aria-label="Calculator"><Ico n="calc" /></SmallBtn>
                <SmallBtn $w={28} $c $on aria-label="Quick measure"><Ico n="quick" /></SmallBtn>
              </Rows>
            </Group>
            <Group title="CONTROL" w={78} pl={12} plain>
              <Rows>
                <Row><Small n="showgrp" w={25} center /><Small n="isogrp" w={25} center /></Row>
                <Row><Small n="hidegrp" w={25} center /><Small n="hatchhide" w={25} center /></Row>
              </Rows>
            </Group>
          </RibbonPanel>
        </RibbonMain>
      </RibbonWrap>

      <Workspace>
        <Drawing>
          <DocTabs>
            <DocTab $w={95}>Drawing1<button aria-label="Close Drawing1"><Cross /></button></DocTab>
            <DocTab $w={88} $on>Room 1*<button aria-label="Close Room 1"><Cross /></button></DocTab>
            <AddTab aria-label="New drawing"><svg width="11" height="11" stroke="#eceef0"><path d="M5.500 0v11M0 5.500h11" /></svg></AddTab>
          </DocTabs>
          <CanvasArea>
            <Scene>
              <Cabinet x={400} y={192} />
              <Cabinet x={1030} y={364} open />
              <Ucs />
              <circle cx="2117" cy="49" r="38.5" fill="#8d8d8d" />
              <g fill="none" strokeWidth="1.3">
                <path d="M1978 1029L2167 1081" stroke="#f47c78" />
                <path d="M2044 1146L2167 1013" stroke="#0cb45c" />
                <path d="M2116.500 779V1146" stroke="#0d78f2" strokeWidth="1" />
                <rect x="2109.5" y="1060.5" width="14" height="14" stroke="#fff" strokeWidth="1" />
              </g>
              <g fill="#3a3a3a">
                {Array.from({ length: 8 }, (_, i) => (
                  <path key={i} d="M2117 15l2.500 4h-5z" transform={`rotate(${i * 45} 2117 49)`} />
                ))}
              </g>
            </Scene>
            <CommandDock>
              <History><p>Entities in set: 1</p><p>Select entities:</p><p>Specify base point:</p></History>
              <CommandLine>
                <CommandGrip />
                <input aria-label="Command line" defaultValue="Specify second point of displacement:" />
                <svg width="10" height="6"><path d="M0 6h10L5 0z" fill="#d5d7d7" /></svg>
              </CommandLine>
            </CommandDock>
          </CanvasArea>
        </Drawing>

        <Side>
          <SideHead>MICROVELLUM<CloseBtn aria-label="Close panel"><Cross c="#111" w={2} s={8} /></CloseBtn></SideHead>
          <SideBody>
            <LeftStrip>
              <StripGrip />
              <StripBtn $h={29} aria-label="Settings"><Ico n="gearK" size={14} /></StripBtn>
              <StripRule />
              {strip.map((n) => <StripBtn key={n} aria-label={n}><Ico n={n} size={24} /></StripBtn>)}
            </LeftStrip>
            <Center>
              <Menu>{["Company Setup", "Toolbox Setup", "Other", "Help"].map((m) => <button key={m}>{m}</button>)}</Menu>
              <PanelTabs>
                <TabRow><PanelTab>Product Viewer</PanelTab></TabRow>
                <TabRow>
                  <PanelTab>Project</PanelTab><PanelTab>Draw</PanelTab><PanelTab $on>Modify</PanelTab><PanelTab>Solid Modeling</PanelTab>
                </TabRow>
              </PanelTabs>
              <PanelFrame>
                <VTabs>{vtabs.map((t) => <VTab key={t} $on={t === "Parts"}><span>{t}</span></VTab>)}</VTabs>
                <ListPane>
                  <PartList>{parts.map(([n, t]) => <li key={t}><PartItem><Ico n={n} size={24} />{t}</PartItem></li>)}</PartList>
                </ListPane>
              </PanelFrame>
            </Center>
            <RightStrip>
              {["markerW", "finger", "cube", "camera", "folderStar"].map((n) => <BlueBtn key={n} aria-label={n}><Ico n={n} size={24} /></BlueBtn>)}
              {["clip1", "clip2", "clip3"].map((n) => <PlainBtn key={n} aria-label={n}><Ico n={n} size={24} /></PlainBtn>)}
              <RightRule />
              {["folderK", "ruler", "repAdd", "repUp", "printK"].map((n) => <PlainBtn key={n} aria-label={n}><Ico n={n} size={24} /></PlainBtn>)}
            </RightStrip>
          </SideBody>
        </Side>
      </Workspace>

      <StatusBar>
        <MenuLines aria-label="Layouts" />
        <LayoutTab $on><Ico n="modelI" />Model</LayoutTab>
        {["TITLE", "SH01", "SH02", "DETAIL", "Base View"].map((t) => <LayoutTab key={t}>{t}</LayoutTab>)}
        <PlusButton aria-label="Add layout"><svg width="13" height="13" stroke="#cfd2d6"><path d="M6.500 0v13M0 6.500h13" /></svg></PlusButton>
        <StatusGroup>
          <Coords>619.4411, 258.4388, 0</Coords>
          {statusItems.map((s) => (
            <StatusBtn key={s.label} $on={s.on} $dim={s.dim} $large={s.large}>
              <Ico n={s.n} />{s.label}
              {s.arrow && <StatusArrow $split={s.on}><Chevron /></StatusArrow>}
            </StatusBtn>
          ))}
          <KebabButton aria-label="More"><svg width="4" height="14" fill="#eceef0"><path d="M0 0h3v3H0zM0 5h3v3H0zM0 10h3v3H0z" /></svg></KebabButton>
        </StatusGroup>
      </StatusBar>
    </Shell>
  );
}
